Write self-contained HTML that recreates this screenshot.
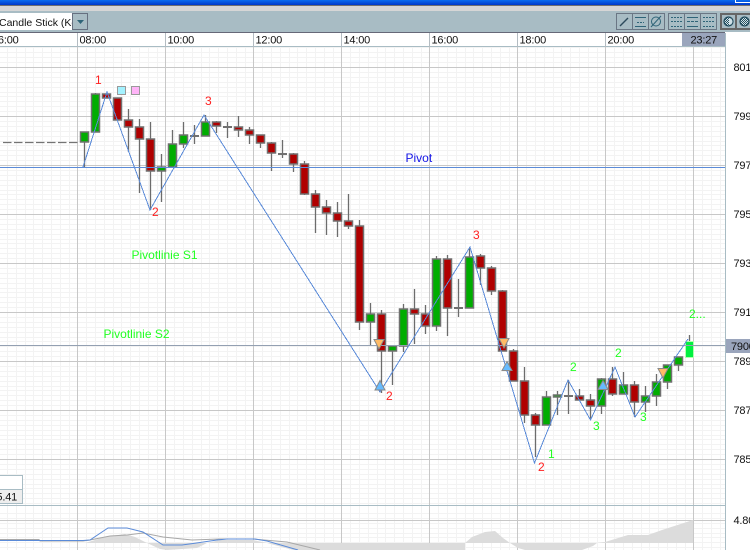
<!DOCTYPE html>
<html>
<head>
<meta charset="utf-8">
<style>
html,body{margin:0;padding:0;width:750px;height:550px;overflow:hidden;background:#fff}
svg{display:block}
text{font-family:"Liberation Sans",Arial,sans-serif;font-size:12px}
.ax{font-size:11px;fill:#111;letter-spacing:-.2px}
.wk{stroke:#6c6c6c;stroke-width:1.3;fill:none}
.dj{stroke:#707070;stroke-width:2;fill:none;shape-rendering:crispEdges}
.r rect{fill:#b00000;stroke:#707070;stroke-width:1.5}
.g rect{fill:#00ad00;stroke:#707070;stroke-width:1.5}
.rd{fill:#ff2020}
.gn{fill:#22ff22}
</style>
</head>
<body>
<svg width="750" height="550" viewBox="0 0 750 550" xmlns="http://www.w3.org/2000/svg">
<defs>
<linearGradient id="tb" x1="0" y1="0" x2="0" y2="1"><stop offset="0" stop-color="#0a6cf0"/><stop offset="1" stop-color="#0038c8"/></linearGradient>
<pattern id="mn" patternUnits="userSpaceOnUse" x="77" y="67" width="88" height="49">
<path d="M9.5 0V49M18.5 0V49M27.5 0V49M36.5 0V49M44.5 0V49M53.5 0V49M62.5 0V49M71.5 0V49M80.5 0V49M0 5.5H88M0 10.5H88M0 15.5H88M0 20.5H88M0 25.5H88M0 29.5H88M0 34.5H88M0 39.5H88M0 44.5H88" stroke="#f3f3f3" stroke-width="1" fill="none" shape-rendering="crispEdges"/>
</pattern>
<pattern id="hat" patternUnits="userSpaceOnUse" width="2" height="2"><rect width="2" height="2" fill="#d5e2e8"/><rect width="1" height="1" fill="#23505f"/><rect x="1" y="1" width="1" height="1" fill="#23505f"/></pattern>
<clipPath id="dd"><rect x="0" y="13" width="72" height="17"/></clipPath>
<clipPath id="rx"><rect x="726" y="47" width="24" height="503"/></clipPath>
<clipPath id="ib"><rect x="0" y="489" width="22" height="14"/></clipPath>
<clipPath id="plot"><rect x="0" y="505" width="725" height="45"/></clipPath>
</defs>

<!-- top chrome -->
<rect x="0" y="0" width="750" height="5" fill="url(#tb)"/>
<rect x="0" y="5" width="750" height="1" fill="#707070"/>
<rect x="0" y="6" width="750" height="5" fill="#d6d6d6"/>
<rect x="0" y="11" width="750" height="21" fill="#a8bcc4"/>
<rect x="0" y="32" width="725" height="1" fill="#666878"/>
<path d="M735.5 0V2.5H750" stroke="#fff" fill="none"/>

<!-- dropdown -->
<rect x="0" y="13" width="72" height="17" fill="#fff"/>
<g clip-path="url(#dd)"><text x="-1" y="26" style="font-size:10.5px" fill="#111">Candle Stick (Ke</text></g>
<rect x="72.5" y="13.5" width="15" height="16" fill="#a8bcc4" stroke="#667080"/>
<path d="M77 20H84L80.5 24Z" fill="#2f6478"/>

<!-- toolbar -->
<g fill="none" stroke="#6a7684" shape-rendering="crispEdges">
<rect x="616.5" y="13.5" width="48" height="16"/><path d="M632.5 13V30M648.5 13V30"/>
<rect x="668.5" y="13.5" width="48" height="16"/><path d="M684.5 13V30M700.5 13V30"/>
</g>
<path d="M620 26L628 18" stroke="#2d4a5c" stroke-width="1.4" fill="none"/>
<g stroke="#2f6478" fill="none" shape-rendering="crispEdges">
<path d="M635 17.5H646M635 26.5H646"/><path d="M637 22.5H644" stroke-dasharray="2 1"/>
<path d="M671 17.5H682M671 21.5H682M671 26.5H682" stroke-dasharray="2 1"/>
<path d="M687 17.5H698M687 26.5H698" /><path d="M687 21.5H698" stroke-dasharray="3 1"/>
<path d="M703 17.5H714M703 21.5H714M703 26.5H714" stroke-dasharray="2 1"/>
</g>
<circle cx="656" cy="21.5" r="4.5" fill="none" stroke="#2f6478"/><path d="M651 27L661 16" stroke="#2f6478" fill="none"/>
<rect x="721" y="14" width="15" height="15" fill="#a8bcc4" stroke="#666" stroke-width="2"/>
<rect x="736" y="14" width="15" height="15" fill="#a8bcc4" stroke="#666" stroke-width="2"/>
<circle cx="728.5" cy="21.5" r="4.5" fill="url(#hat)" stroke="#1f4a5c" stroke-width="1.2"/>
<path d="M729 18A3.5 3.5 0 0 1 729 25Z" fill="#cfe0e6"/>
<circle cx="744.5" cy="21.5" r="4.5" fill="url(#hat)" stroke="#1f4a5c" stroke-width="1.2"/>

<!-- time axis -->
<rect x="0" y="33" width="725" height="13" fill="#fff"/>
<rect x="0" y="46" width="725" height="1" fill="#a8bcc4"/>
<g fill="#b4bcc2" shape-rendering="crispEdges">
<rect x="77" y="33" width="1" height="14"/><rect x="165" y="33" width="1" height="14"/><rect x="253" y="33" width="1" height="14"/><rect x="341" y="33" width="1" height="14"/><rect x="429" y="33" width="1" height="14"/><rect x="517" y="33" width="1" height="14"/><rect x="605" y="33" width="1" height="14"/>
</g>
<rect x="682" y="33" width="43" height="13" fill="#9aa5bc"/>
<g>
<text class="ax" x="-8" y="43.5">16:00</text>
<text class="ax" x="79.5" y="43.5">08:00</text>
<text class="ax" x="167.5" y="43.5">10:00</text>
<text class="ax" x="255.5" y="43.5">12:00</text>
<text class="ax" x="343.5" y="43.5">14:00</text>
<text class="ax" x="431.5" y="43.5">16:00</text>
<text class="ax" x="519.5" y="43.5">18:00</text>
<text class="ax" x="607.5" y="43.5">20:00</text>
<text class="ax" x="690.5" y="43.5">23:27</text>
</g>

<!-- grid -->
<rect x="0" y="47" width="725" height="503" fill="#fff"/>
<rect x="0" y="47" width="725" height="503" fill="url(#mn)"/>
<g stroke="#c8c8c8" stroke-width="1" fill="none" shape-rendering="crispEdges">
<path d="M77.5 47V550M165.5 47V550M253.5 47V550M341.5 47V550M429.5 47V550M517.5 47V550M605.5 47V550M693.5 47V550"/>
<path d="M0 67.5H725M0 116.5H725M0 165.5H725M0 214.5H725M0 263.5H725M0 312.5H725M0 361.5H725M0 410.5H725M0 459.5H725M0 520.5H725"/>
</g>
<rect x="0" y="505" width="725" height="1" fill="#a8bcc4"/>
<rect x="725" y="33" width="1" height="517" fill="#a8bcc4"/>

<!-- info box -->
<rect x="-2" y="475.5" width="24.5" height="28" fill="#fff" stroke="#a8bcc4"/>
<rect x="0" y="490" width="22" height="13" fill="#eeeeee"/>
<path d="M0 489.5H22" stroke="#a8bcc4"/>
<g clip-path="url(#ib)"><text x="-9.5" y="500.5" class="ax">15.41</text></g>

<!-- right axis -->
<rect x="726" y="339" width="24" height="14" fill="#9aa5bc"/>
<g clip-path="url(#rx)">
<text class="ax" x="733.5" y="71">8010</text>
<text class="ax" x="733.5" y="120">7990</text>
<text class="ax" x="733.5" y="169">7970</text>
<text class="ax" x="733.5" y="218">7950</text>
<text class="ax" x="733.5" y="267">7930</text>
<text class="ax" x="733.5" y="316">7910</text>
<text class="ax" x="731" y="350">7900</text>
<text class="ax" x="733.5" y="365">7890</text>
<text class="ax" x="733.5" y="414">7870</text>
<text class="ax" x="733.5" y="463">7850</text>
<text class="ax" x="733.5" y="524">4.80</text>
</g>

<!-- indicator pane -->
<g clip-path="url(#plot)">
<path fill="#dcdcdc" d="M85 543L105 537L125 534L135 537L147 543L160 549L167 550L197 548L207 543L220 540L253 540L267 543L293 550L448 550L465 543ZM465 543L472 537L485 532L495 531L503 538L510 543ZM510 543L518 548L525 550L582 550L593 546L597 543ZM597 543L605 542L628 535L648 535L662 530L693 520L693 543Z"/>
<path fill="#dcdcdc" d="M300 543H465V550H300Z"/>
<polyline fill="none" stroke="#a8a8a8" stroke-width="1" points="0,539.5 39,539.5 40,541 83,541 90,540 110,536 127,535 143,533 163,537 192,540 220,539 253,539 287,542 320,550"/>
<polyline fill="none" stroke="#5b8bd8" stroke-width="1" points="0,540.5 83,540.5 90,540 108,528 127,528 143,532 163,545 182,545 193,543.5 217,540 227,539 255,539 267,541 298,550"/>
</g>

<!-- dashed pivot stub -->
<path d="M3 142.5H80" stroke="#747474" stroke-width="1.2" stroke-dasharray="8.5 2.5" fill="none"/>

<!-- wicks -->
<path class="wk" d="M84.5 132V167M95.5 93V132M128.5 109V152M139.5 119V193M150.5 122V210M161.5 154V202M172.5 130V167M183.5 122V148M194.5 125V144M205.5 115V136M216.5 121V133M227.5 122V138M238.5 116V137M249.5 127V144M260.5 135V148M271.5 142V171M282.5 140V158M293.5 153V172M304.5 161V195M315.5 190V233M326.5 200V235M337.5 202V237M348.5 194V229M359.5 220V330M370.5 303V345M381.5 310V393M392.5 346V385M403.5 304V352M414.5 289V344M425.5 305V334M436.5 256V331M447.5 255V336M458.5 279V317M469.5 248V308M480.5 254V285M491.5 266V295M502.5 290V351M513.5 349V381M524.5 367V423M535.5 413V457M546.5 391V425M557.5 391V415M568.5 380V414M579.5 389V400M590.5 394V419M601.5 378V414M612.5 367V396M623.5 372V394M634.5 381V417M645.5 386V412M656.5 374V406M667.5 365V389M678.5 357V371M689.5 335V341"/>
<!-- dojis -->
<path class="dj" d="M190 136H199M223 127H232M278 154H287M454 308H463M564 396H573"/>

<!-- bullish bodies -->
<g class="g">
<rect x="80.5" y="132" width="8" height="10"/>
<rect x="91.5" y="94" width="8" height="38"/>
<rect x="157.5" y="167" width="8" height="4"/>
<rect x="168.5" y="144" width="8" height="23"/>
<rect x="179.5" y="135" width="8" height="9"/>
<rect x="201.5" y="122" width="8" height="14"/>
<rect x="366.5" y="314" width="8" height="8"/>
<rect x="388.5" y="346" width="8" height="5"/>
<rect x="399.5" y="309" width="8" height="37"/>
<rect x="432.5" y="259" width="8" height="67"/>
<rect x="465.5" y="257" width="8" height="51"/>
<rect x="542.5" y="397" width="8" height="28"/>
<rect x="553.5" y="395" width="8" height="2"/>
<rect x="597.5" y="379" width="8" height="27"/>
<rect x="619.5" y="385" width="8" height="9"/>
<rect x="641.5" y="396" width="8" height="6"/>
<rect x="652.5" y="382" width="8" height="14"/>
<rect x="663.5" y="365" width="8" height="17"/>
<rect x="674.5" y="357" width="8" height="8"/>
</g>
<!-- bearish bodies -->
<g class="r">
<rect x="102.5" y="94" width="8" height="4"/>
<rect x="113.5" y="98" width="8" height="22"/>
<rect x="124.5" y="120" width="8" height="7"/>
<rect x="135.5" y="127" width="8" height="12"/>
<rect x="146.5" y="139" width="8" height="32"/>
<rect x="212.5" y="122" width="8" height="4"/>
<rect x="234.5" y="127" width="8" height="3"/>
<rect x="245.5" y="130" width="8" height="5"/>
<rect x="256.5" y="135" width="8" height="8"/>
<rect x="267.5" y="143" width="8" height="10"/>
<rect x="289.5" y="154" width="8" height="10"/>
<rect x="300.5" y="164" width="8" height="30"/>
<rect x="311.5" y="194" width="8" height="13"/>
<rect x="322.5" y="207" width="8" height="6"/>
<rect x="333.5" y="213" width="8" height="8"/>
<rect x="344.5" y="221" width="8" height="5"/>
<rect x="355.5" y="226" width="8" height="96"/>
<rect x="377.5" y="314" width="8" height="37"/>
<rect x="410.5" y="309" width="8" height="5"/>
<rect x="421.5" y="314" width="8" height="12"/>
<rect x="443.5" y="259" width="8" height="49"/>
<rect x="476.5" y="256" width="8" height="12"/>
<rect x="487.5" y="268" width="8" height="23"/>
<rect x="498.5" y="291" width="8" height="60"/>
<rect x="509.5" y="351" width="8" height="30"/>
<rect x="520.5" y="381" width="8" height="34"/>
<rect x="531.5" y="415" width="8" height="10"/>
<rect x="575.5" y="396" width="8" height="4"/>
<rect x="586.5" y="400" width="8" height="6"/>
<rect x="608.5" y="379" width="8" height="15"/>
<rect x="630.5" y="385" width="8" height="17"/>
</g>
<rect x="685.5" y="341.5" width="8" height="16" fill="#00f040" stroke="#b0ffb0"/>

<!-- pivot lines -->
<rect x="0" y="167" width="725" height="1" fill="#5b8bd8"/>
<rect x="0" y="345" width="725" height="1" fill="#93a0b2"/>

<!-- zigzag -->
<polyline fill="none" stroke="#5b8bd8" stroke-width="1" shape-rendering="crispEdges" points="83,167 107,92 150,210 204,115 380,392 470,247 534.5,463 568,380 590.5,420 615,367 635,417 688,339"/>

<!-- markers -->
<rect x="117.5" y="86.5" width="8" height="8" fill="#a4f2ff" stroke="#9a9a9a"/>
<rect x="131.5" y="86.5" width="8" height="8" fill="#ffb4f8" stroke="#9a9a9a"/>
<g fill="#66bbff" stroke="#8a8a8a" stroke-width="1">
<path d="M380 380.5L385 390H375Z"/>
<path d="M507 361.5L512 370.5H502Z"/>
<path d="M603 380.5L608 389.5H598Z"/>
</g>
<g fill="#ffbb66" stroke="#8a8a8a" stroke-width="1">
<path d="M374 339.5H384L379 349Z"/>
<path d="M499 338.5H509L504 348Z"/>
<path d="M658 368.5H668L663 378Z"/>
</g>

<!-- labels -->
<text x="405.5" y="162" fill="#1414e6">Pivot</text>
<text x="131.5" y="259" class="gn">Pivotlinie S1</text>
<text x="103.5" y="338" class="gn">Pivotlinie S2</text>

<text class="rd" x="95" y="84">1</text>
<text class="rd" x="152" y="216">2</text>
<text class="rd" x="205" y="105">3</text>
<text class="rd" x="386" y="400">2</text>
<text class="rd" x="473" y="239">3</text>
<text class="rd" x="538" y="471">2</text>
<text class="gn" x="548" y="458">1</text>
<text class="gn" x="570" y="371">2</text>
<text class="gn" x="593" y="430">3</text>
<text class="gn" x="615" y="357">2</text>
<text class="gn" x="640" y="421">3</text>
<text class="gn" x="689" y="318">2...</text>
</svg>
</body>
</html>
